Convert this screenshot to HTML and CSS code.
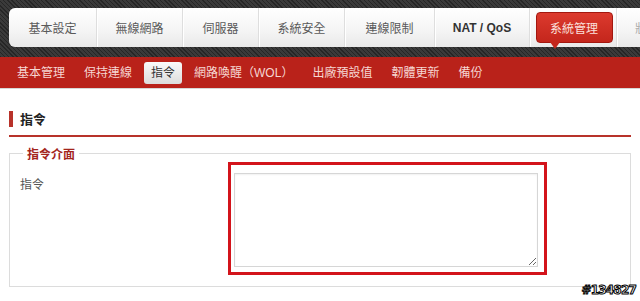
FILE: index.html
```html
<!DOCTYPE html>
<html>
<head>
    <title>系統管理 - 指令</title>
    <link rel="stylesheet" href="styles.css">
</head>
<body>

<div class="topbar">
    <ul class="mainnav">
        <li class="w88">基本設定</li>
        <li class="w86">無線網路</li>
        <li class="w76">伺服器</li>
        <li class="w86">系統安全</li>
        <li class="w90">連線限制</li>
        <li class="w95 latin">NAT / QoS</li>
        <li class="w87"><span class="active">系統管理</span></li>
        <li class="w88 more">狀態</li>
    </ul>
</div>

<ul class="subnav">
    <li>基本管理</li>
    <li>保持連線</li>
    <li class="current">指令</li>
    <li>網路喚醒（WOL）</li>
    <li>出廠預設值</li>
    <li>韌體更新</li>
    <li>備份</li>
</ul>

<div class="content">
    <h2 class="title">指令</h2>

    <fieldset class="group">
        <legend>指令介面</legend>
        <div class="row">
            <label for="cmd">指令</label>
            <div class="mark">
                <textarea id="cmd"></textarea>
            </div>
        </div>
    </fieldset>
</div>

<div class="stamp">#134827</div>

</body>
</html>
```

FILE: styles.css
```css
body {
    margin: 0;
    font-family: "Liberation Sans", "Noto Sans CJK TC", sans-serif;
    font-size: 12px;
    background-color: #fff;
    overflow: hidden;
}
ul {
    list-style: none;
    margin: 0;
    padding: 0;
}
.topbar {
    height: 49px;
    padding: 8px 0 0 9px;
    background-color: #2e2e2e;
    background-image: repeating-linear-gradient(45deg, #262626 0, #262626 1px, #3a3a3a 1px, #3a3a3a 3px);
    overflow: hidden;
}
.mainnav {
    display: flex;
    width: 720px;
    height: 39px;
    border-radius: 6px 0 0 6px;
    background: linear-gradient(#ffffff, #f4f4f4 60%, #e9e9e9);
}
.mainnav li {
    flex: none;
    display: flex;
    align-items: center;
    justify-content: center;
    box-sizing: border-box;
    border-right: 1px solid #dedede;
    box-shadow: 1px 0 0 #fff;
    color: #5a5a5a;
    font-size: 12px;
}
.mainnav li.latin {
    color: #333;
    font-weight: bold;
}
.mainnav li.more {
    justify-content: flex-start;
    padding-left: 18px;
    color: #aaa;
}
.w76 { width: 76px; }
.w86 { width: 86px; }
.w87 { width: 87px; }
.w88 { width: 88px; }
.w90 { width: 90px; }
.w95 { width: 95px; }
.mainnav .active {
    position: relative;
    display: flex;
    align-items: center;
    justify-content: center;
    width: 75px;
    height: 29px;
    margin-left: 2px;
    border: 1px solid #a3170f;
    border-radius: 4px;
    background: linear-gradient(#dc3a2e, #c4261c);
    color: #fbe0dc;
}
.mainnav .active::after {
    content: "";
    position: absolute;
    left: 13px;
    bottom: -7px;
    border-left: 5px solid transparent;
    border-right: 5px solid transparent;
    border-top: 7px solid #c4261c;
}
.subnav {
    display: flex;
    align-items: center;
    gap: 5px;
    height: 31px;
    padding-left: 10px;
    background-color: #b9221a;
    border-bottom: 1px solid #d7d7d7;
}
.subnav li {
    padding: 0 7px;
    line-height: 22px;
    color: #f6d6d2;
    font-size: 12px;
}
.subnav li.current {
    border-radius: 3px;
    background: linear-gradient(#fafafa, #dcdcdc);
    color: #333;
}
.content {
    padding: 22px 9px 0 9px;
}
.title {
    margin: 0;
    padding: 0 0 7px 0;
    border-bottom: 2px solid #b8322a;
    font-size: 13px;
    line-height: 17px;
    color: #222;
}
.title::before {
    content: "";
    display: inline-block;
    width: 4px;
    height: 16px;
    margin-right: 7px;
    vertical-align: -3px;
    background-color: #b8322a;
}
.group {
    margin: 8px 0 0 0;
    padding: 0 0 11px 10px;
    border: 1px solid #dcdcdc;
}
.group legend {
    padding: 0 4px;
    margin-left: 3px;
    color: #a3241c;
    font-weight: bold;
    font-size: 12px;
}
.row {
    display: flex;
}
.row label {
    width: 208px;
    padding-top: 13px;
    color: #555;
}
.mark {
    display: flex;
    padding: 8px 6px 5px 3px;
    border: 3px solid #d3141b;
}
.mark textarea {
    width: 302px;
    height: 92px;
    margin: 0;
    padding: 0;
    border: 1px solid #d6d6d6;
    box-shadow: inset 0 1px 2px rgba(0, 0, 0, 0.06);
}
.stamp {
    position: absolute;
    right: 4px;
    bottom: 4px;
    font-family: "DejaVu Sans", sans-serif;
    font-weight: bold;
    font-size: 12px;
    color: #fff;
    -webkit-text-stroke: 1px #000;
    letter-spacing: -0.8px;
}
```
